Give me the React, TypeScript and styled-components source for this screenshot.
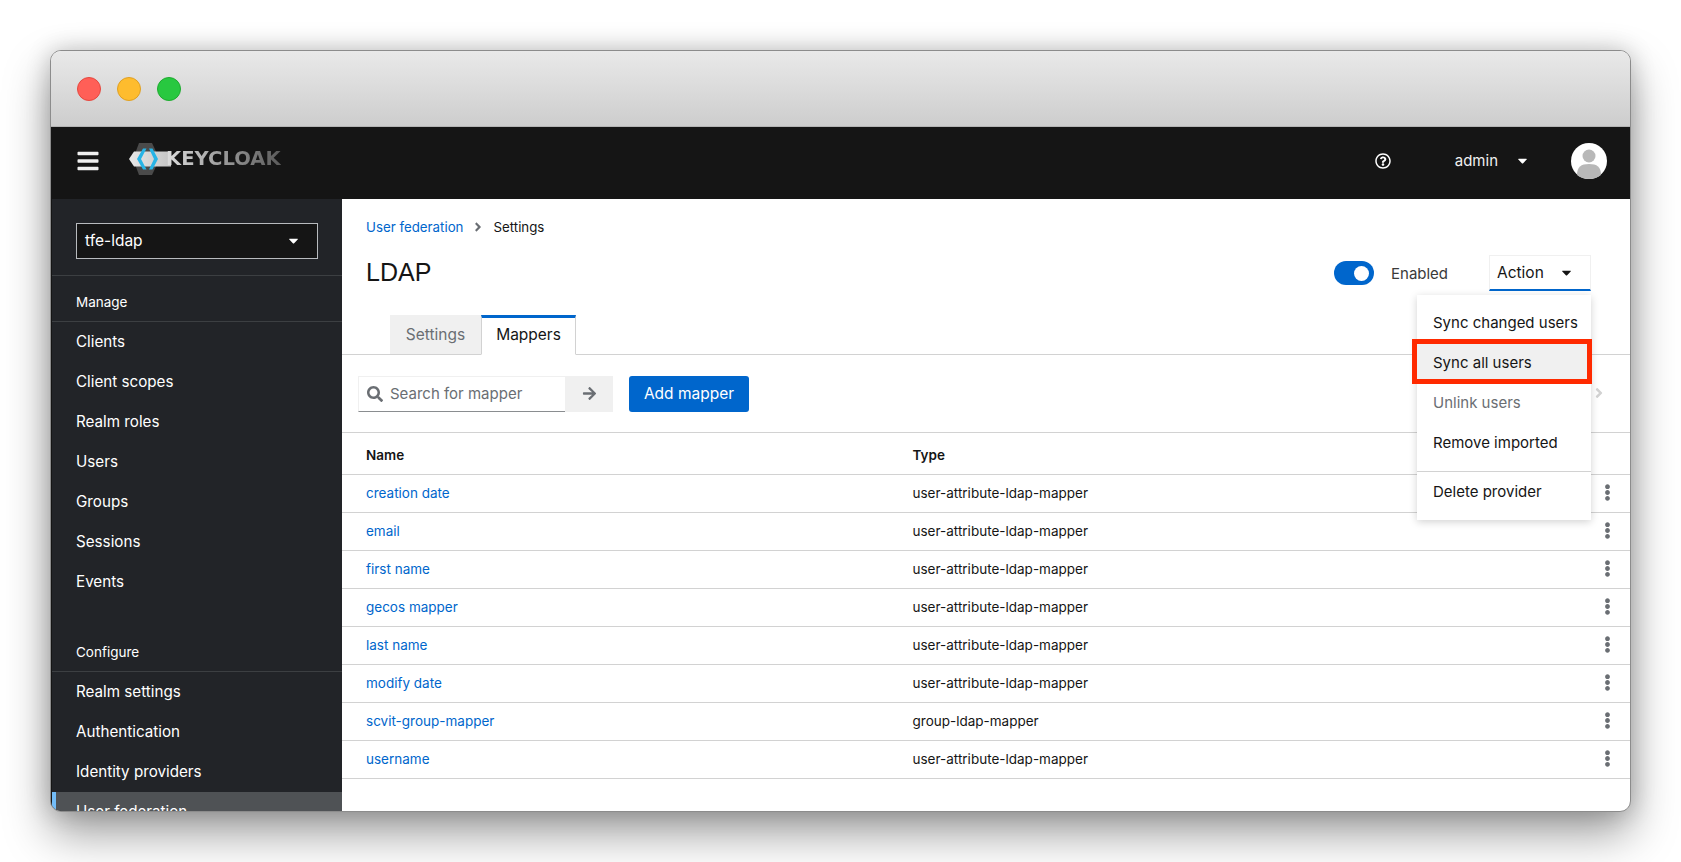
import React from "react"
import styled, { createGlobalStyle } from "styled-components"
import { FaAngleRight, FaArrowRight, FaBars, FaCaretDown, FaEllipsisV, FaRegQuestionCircle, FaSearch } from "react-icons/fa"

const FONT = `Inter, "Noto Sans", "Liberation Sans", sans-serif`

const GlobalStyle = createGlobalStyle`
	html, body {
		margin: 0;
		height: 100%;
		background: #fff;
		overflow: hidden;
		font-family: ${FONT};
		color: #151515;
	}
	* {
		box-sizing: border-box;
	}
`

const Page = styled.div`
	padding: 50px 0 0 50px;
`

const Window = styled.div`
	width: 1581px;
	height: 762px;
	display: flex;
	flex-direction: column;
	border: 1px solid #8c8c8c;
	border-radius: 11px;
	overflow: hidden;
	background: #fff;
	box-shadow: 0 22px 46px rgba(0, 0, 0, 0.38), 0 0 24px rgba(0, 0, 0, 0.2);
`

const TitleBar = styled.div`
	flex: 0 0 76px;
	display: flex;
	align-items: center;
	gap: 16px;
	padding: 0 0 0 26px;
	background: linear-gradient(#e9e9e9, #cdcdcd);
	border-bottom: 1px solid #b4b4b4;
`

const Light = styled.span<{ $color: string; $edge: string }>`
	width: 24px;
	height: 24px;
	border-radius: 50%;
	background: ${(p) => p.$color};
	border: 1px solid ${(p) => p.$edge};
`

const Masthead = styled.header`
	flex: 0 0 72px;
	display: flex;
	align-items: center;
	background: #151515;
	color: #fff;
	padding-left: 25px;
	padding-right: 23px;
`

const Burger = styled.span`
	display: flex;
	font-size: 24px;
	color: #f0f0f0;
	margin: -4px 29px 0 0;
`

const Logo = styled.div`
	display: flex;
	align-items: center;
	margin-top: -8px;
`

const LogoText = styled.span`
	font-family: "DejaVu Sans", sans-serif;
	font-weight: 700;
	font-size: 19.600px;
	line-height: 24px;
	margin-left: -5px;
	background: linear-gradient(90deg, #dedede, #9a9a9a 50%, #5a5a5a);
	-webkit-background-clip: text;
	background-clip: text;
	color: transparent;
`

const HeadTools = styled.div`
	margin-left: auto;
	margin-top: -5px;
	display: flex;
	align-items: center;
`

const HelpIcon = styled.span`
	display: flex;
	font-size: 16px;
	margin-right: 64px;
`

const UserName = styled.span`
	font-size: 15px;
	color: #f0f0f0;
	margin-right: 17px;
`

const UserCaret = styled.span`
	display: flex;
	font-size: 15px;
	margin-right: 41px;
`

const Avatar = styled.svg`
	width: 36px;
	height: 36px;
	display: block;
`

const Body = styled.div`
	flex: 1;
	min-height: 0;
	display: flex;
`

const Sidebar = styled.nav`
	flex: 0 0 291px;
	background: #222428;
	border-left: 1px solid #151515;
	color: #fff;
	overflow: hidden;
`

const RealmBox = styled.div`
	padding: 24px 24px 16px;
	border-bottom: 1px solid #3c3f42;
`

const RealmSelect = styled.div`
	height: 36px;
	display: flex;
	align-items: center;
	justify-content: space-between;
	background: #151515;
	border: 1px solid #b8bbbe;
	padding: 0 16px 2px 8px;
	font-size: 15.500px;
`

const NavGroup = styled.div<{ $gap?: number }>`
	margin-top: ${(p) => p.$gap ?? 0}px;
`

const NavLabel = styled.div`
	height: 46px;
	display: flex;
	align-items: center;
	padding: 6px 0 0 24px;
	font-size: 13.500px;
	border-bottom: 1px solid #3c3f42;
`

const NavItem = styled.div<{ $current?: boolean }>`
	height: 40px;
	display: flex;
	align-items: center;
	padding: 0 0 2px ${(p) => (p.$current ? 20 : 24)}px;
	font-size: 15.200px;
	background: ${(p) => (p.$current ? "#4f5255" : "transparent")};
	border-left: ${(p) => (p.$current ? "4px solid #73bcf7" : "none")};
`

const Main = styled.main`
	flex: 1;
	min-width: 0;
	display: flex;
	flex-direction: column;
`

const Breadcrumb = styled.div`
	display: flex;
	align-items: center;
	height: 20px;
	margin: 18px 0 0 24px;
	font-size: 13.300px;
`

const Crumb = styled.span`
	color: #06c;
`

const CrumbSep = styled.span`
	display: flex;
	color: #6a6e73;
	font-size: 14px;
	margin: 0 8px;
`

const TitleRow = styled.div`
	display: flex;
	align-items: center;
	margin: 18px 39px 0 24px;
	height: 36px;
`

const Title = styled.h1`
	margin: -2px 0 0;
	font-size: 25px;
	font-weight: 400;
	font-family: "Liberation Sans", sans-serif;
`

const Toggle = styled.span`
	margin-left: auto;
	width: 40px;
	height: 24px;
	border-radius: 12px;
	background: #06c;
	display: flex;
	align-items: center;
	justify-content: flex-end;
	padding-right: 5px;
`

const Knob = styled.span`
	width: 15px;
	height: 15px;
	border-radius: 50%;
	background: #fff;
`

const ToggleLabel = styled.span`
	width: 98px;
	font-size: 15px;
	margin-left: 17px;
	color: #3a3a3a;
`

const Dropdown = styled.div`
	position: relative;
`

const ActionButton = styled.div`
	width: 102px;
	height: 36px;
	display: flex;
	align-items: center;
	justify-content: space-between;
	padding: 0 16px 0 7px;
	border: 1px solid #f0f0f0;
	border-bottom: 2px solid #06c;
	font-size: 15.500px;
`

const Menu = styled.div`
	position: absolute;
	z-index: 5;
	top: 40px;
	right: 0;
	width: 174px;
	padding: 8px 0;
	background: #fff;
	box-shadow: 0 2px 8px rgba(3, 3, 3, 0.18);
`

const MenuItem = styled.div<{ $state?: "disabled" | "marked" }>`
	position: relative;
	height: 40px;
	display: flex;
	align-items: center;
	padding: 0 0 2px 16px;
	font-size: 15px;
	white-space: nowrap;
	color: ${(p) => (p.$state === "disabled" ? "#6a6e73" : "#151515")};
	background: ${(p) => (p.$state === "marked" ? "#f0f0f0" : "transparent")};
	${(p) =>
		p.$state === "marked" &&
		`&::after {
			content: "";
			position: absolute;
			inset: -4px -1px -1px -5px;
			border: 5px solid #ff2a00;
		}`}
`

const MenuRule = styled.div`
	height: 1px;
	margin: 8px 0 0;
	background: #d2d2d2;
`

const TabStrip = styled.div`
	display: flex;
	margin-top: 24px;
	padding-left: 48px;
	height: 40px;
	border-bottom: 1px solid #d2d2d2;
`

const Tab = styled.div<{ $active?: boolean }>`
	height: 40px;
	display: flex;
	align-items: center;
	justify-content: center;
	font-size: 15.500px;
	padding-bottom: ${(p) => (p.$active ? 3 : 0)}px;
	width: ${(p) => (p.$active ? 95 : 91)}px;
	color: ${(p) => (p.$active ? "#151515" : "#6a6e73")};
	background: ${(p) => (p.$active ? "#fff" : "#f0f0f0")};
	border-bottom: ${(p) => (p.$active ? "1px solid #fff" : "1px solid #d2d2d2")};
	border-right: ${(p) => (p.$active ? "1px solid #d2d2d2" : "none")};
	border-left: ${(p) => (p.$active ? "1px solid #d2d2d2" : "none")};
	border-top: ${(p) => (p.$active ? "3px solid #06c" : "none")};
`

const Toolbar = styled.div`
	position: relative;
	height: 78px;
	display: flex;
	align-items: center;
	padding-left: 16px;
	border-bottom: 1px solid #d2d2d2;
`

const SearchBox = styled.div`
	width: 207px;
	height: 36px;
	display: flex;
	align-items: center;
	gap: 7px;
	padding-left: 8px;
	font-size: 15px;
	color: #6a6e73;
	border: 1px solid #f0f0f0;
	border-right: none;
	border-bottom: 1px solid #8a8d90;
`

const ArrowButton = styled.div`
	width: 48px;
	height: 36px;
	display: flex;
	align-items: center;
	justify-content: center;
	background: #f0f0f0;
	color: #6a6e73;
	font-size: 15px;
	margin-right: 16px;
`

const PrimaryButton = styled.div`
	width: 120px;
	height: 36px;
	display: flex;
	align-items: center;
	justify-content: center;
	border-radius: 3px;
	background: #06c;
	color: #fff;
	font-size: 15.500px;
`

const PagerNext = styled.span`
	position: absolute;
	right: 23px;
	top: 30px;
	display: flex;
	color: #d2d2d2;
	font-size: 16px;
`

const TableHead = styled.div`
	height: 42px;
	display: flex;
	align-items: center;
	padding: 2px 0 0 24px;
	font-size: 13.500px;
	font-weight: 600;
	border-bottom: 1px solid #d2d2d2;
`

const Row = styled.div`
	height: 38px;
	display: flex;
	align-items: center;
	padding: 0 0 2px 24px;
	font-size: 13.500px;
	border-bottom: 1px solid #d2d2d2;
`

const NameCell = styled.span<{ $link?: boolean }>`
	flex: 0 0 546.500px;
	color: ${(p) => (p.$link ? "#06c" : "inherit")};
`

const TypeCell = styled.span`
	flex: 1;
`

const Kebab = styled.span`
	display: flex;
	color: #6a6e73;
	font-size: 17px;
	margin-right: 14px;
	margin-top: -1px;
`

const MANAGE = ["Clients", "Client scopes", "Realm roles", "Users", "Groups", "Sessions", "Events"]
const CONFIGURE = ["Realm settings", "Authentication", "Identity providers"]

const MAPPERS = [
	{ name: "creation date", type: "user-attribute-ldap-mapper" },
	{ name: "email", type: "user-attribute-ldap-mapper" },
	{ name: "first name", type: "user-attribute-ldap-mapper" },
	{ name: "gecos mapper", type: "user-attribute-ldap-mapper" },
	{ name: "last name", type: "user-attribute-ldap-mapper" },
	{ name: "modify date", type: "user-attribute-ldap-mapper" },
	{ name: "scvit-group-mapper", type: "group-ldap-mapper" },
	{ name: "username", type: "user-attribute-ldap-mapper" },
]

const LogoMark = () => (
	<svg width="42" height="34" viewBox="0 0 42 34" aria-hidden="true">
		<defs>
			<linearGradient id="band" x1="0" x2="1" y1="0" y2="0">
				<stop offset="0" stopColor="#e8e8e8" />
				<stop offset="1" stopColor="#c4c4c4" />
			</linearGradient>
		</defs>
		<path d="M10 1h13l7.500 16-7.500 16H10L4 17z" fill="#4a4a4a" />
		<path d="M0 17l5-7.500h37v15H5z" fill="url(#band)" />
		<path d="M14 6.500l-6 10.500 6 10.500h3.500L12 17l5.500-10.500z" fill="#27b4e6" />
		<path d="M20 6.500L25 17l-5 10.500h3.500l5.500-10.500-5.500-10.500z" fill="#27b4e6" />
	</svg>
)

const App = () => (
	<Page>
		<GlobalStyle />
		<Window>
			<TitleBar>
				<Light $color="#ff5f57" $edge="#e5483f" />
				<Light $color="#febc2e" $edge="#dfa023" />
				<Light $color="#28c840" $edge="#1eab2f" />
			</TitleBar>
			<Masthead>
				<Burger>
					<FaBars />
				</Burger>
				<Logo>
					<LogoMark />
					<LogoText>KEYCLOAK</LogoText>
				</Logo>
				<HeadTools>
					<HelpIcon>
						<FaRegQuestionCircle />
					</HelpIcon>
					<UserName>admin</UserName>
					<UserCaret>
						<FaCaretDown />
					</UserCaret>
					<Avatar viewBox="0 0 36 36" aria-hidden="true">
						<circle cx="18" cy="18" r="18" fill="#fff" />
						<circle cx="18" cy="13" r="6.500" fill="#b8b8b8" />
						<path d="M6 32c0-8 4-11 12-11s12 3 12 11c-3 2.600-7.500 4-12 4S9 34.600 6 32z" fill="#b8b8b8" />
					</Avatar>
				</HeadTools>
			</Masthead>
			<Body>
				<Sidebar>
					<RealmBox>
						<RealmSelect>
							tfe-ldap
							<FaCaretDown size={15} />
						</RealmSelect>
					</RealmBox>
					<NavGroup>
						<NavLabel>Manage</NavLabel>
						{MANAGE.map((item) => (
							<NavItem key={item}>{item}</NavItem>
						))}
					</NavGroup>
					<NavGroup $gap={24}>
						<NavLabel>Configure</NavLabel>
						{CONFIGURE.map((item) => (
							<NavItem key={item}>{item}</NavItem>
						))}
						<NavItem $current>User federation</NavItem>
					</NavGroup>
				</Sidebar>
				<Main>
					<Breadcrumb>
						<Crumb>User federation</Crumb>
						<CrumbSep>
							<FaAngleRight />
						</CrumbSep>
						Settings
					</Breadcrumb>
					<TitleRow>
						<Title>LDAP</Title>
						<Toggle>
							<Knob />
						</Toggle>
						<ToggleLabel>Enabled</ToggleLabel>
						<Dropdown>
							<ActionButton>
								Action
								<FaCaretDown size={15} />
							</ActionButton>
							<Menu>
								<MenuItem>Sync changed users</MenuItem>
								<MenuItem $state="marked">Sync all users</MenuItem>
								<MenuItem $state="disabled">Unlink users</MenuItem>
								<MenuItem>Remove imported</MenuItem>
								<MenuRule />
								<MenuItem>Delete provider</MenuItem>
							</Menu>
						</Dropdown>
					</TitleRow>
					<TabStrip>
						<Tab>Settings</Tab>
						<Tab $active>Mappers</Tab>
					</TabStrip>
					<Toolbar>
						<SearchBox>
							<FaSearch size={16} />
							Search for mapper
						</SearchBox>
						<ArrowButton>
							<FaArrowRight />
						</ArrowButton>
						<PrimaryButton>Add mapper</PrimaryButton>
						<PagerNext>
							<FaAngleRight />
						</PagerNext>
					</Toolbar>
					<TableHead>
						<NameCell>Name</NameCell>
						<TypeCell>Type</TypeCell>
					</TableHead>
					{MAPPERS.map((mapper) => (
						<Row key={mapper.name}>
							<NameCell $link>{mapper.name}</NameCell>
							<TypeCell>{mapper.type}</TypeCell>
							<Kebab>
								<FaEllipsisV />
							</Kebab>
						</Row>
					))}
				</Main>
			</Body>
		</Window>
	</Page>
)

export default App
